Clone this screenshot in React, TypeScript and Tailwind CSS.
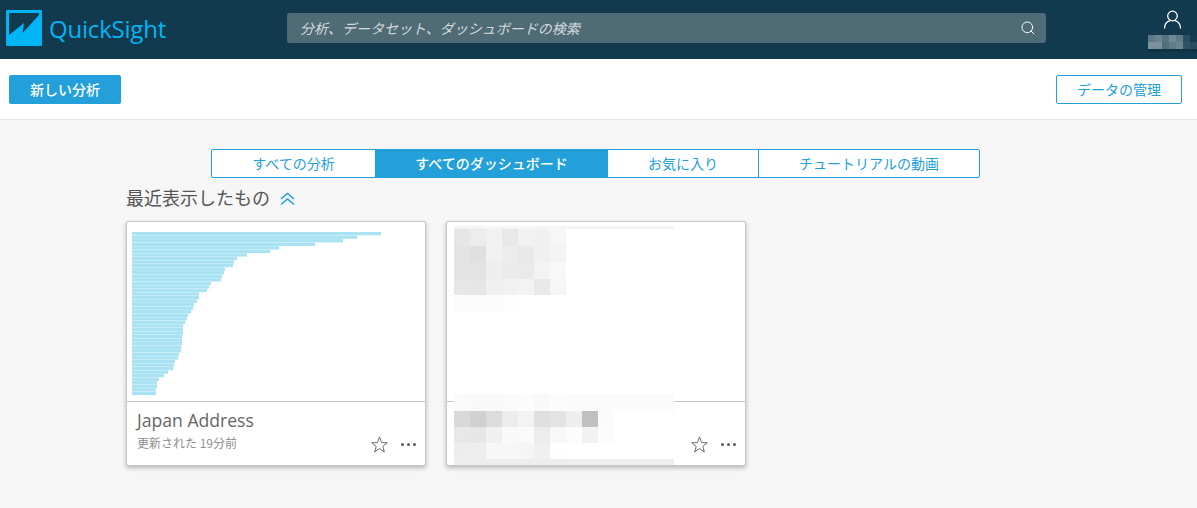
import { Search } from 'lucide-react';

const tabs = [
  { label: 'すべての分析', width: 'w-[163px]' },
  { label: 'すべてのダッシュボード', width: 'w-[233px]', active: true },
  { label: 'お気に入り', width: 'w-[151px]' },
  { label: 'チュートリアルの動画', width: 'flex-1' }
];

// right edges of the bars, in page px
const barEnds = [
  381, 357, 343, 315, 279, 270, 247, 237, 234, 233, 225, 224, 222, 221, 211, 209, 207, 199, 199, 197, 194, 193, 191,
  188, 187, 185, 183, 183, 183, 182, 182, 182, 181, 181, 179, 178, 175, 174, 173, 168, 164, 159, 157, 157, 156, 156
];

const thumbTop = [
  ['#e6e6e6', '#ececec', '#f1f1f1', '#e8e8e8', '#f1f1f1', '#f0f0f0', '#f6f6f6'],
  ['#e3e3e3', '#e0e0e0', '#f1f1f1', '#ececec', '#e9e9e9', '#f0f0f0', '#f3f3f3'],
  ['#e4e4e4', '#e3e3e3', '#eeeeee', '#ebebeb', '#eaeaea', '#f3f3f3', '#f8f8f8'],
  ['#e7e7e7', '#e6e6e6', '#f0f0f0', '#f1f1f1', '#f3f3f3', '#e9e9e9', '#f6f6f6'],
  ['#fcfcfc', '#fcfcfc', '#fcfcfc', '#fdfdfd', '#ffffff', '#ffffff', '#ffffff']
];

const thumbBottom = [
  ['#fafafa', '#f9f9f9', '#f9f9f9', '#fafafa', '#fcfcfc', '#f9f9f9', '#fcfcfc', '#fbfbfb', '#fafafa', '#fbfbfb'],
  ['#d9d9d9', '#d0d0d0', '#dcdcdc', '#ececec', '#f3f3f3', '#e0e0e0', '#e3e3e3', '#eeeeee', '#c0c0c0', '#fbfbfb'],
  ['#e8e8e8', '#e6e6e6', '#f0f0f0', '#f9f9f9', '#fafafa', '#ececec', '#f8f8f8', '#fcfcfc', '#f2f2f2', '#fcfcfc'],
  ['#ededed', '#eeeeee', '#f7f7f7', '#f7f7f7', '#f5f5f5', '#f0f0f0', '#fefefe', '#ffffff', '#ffffff', '#ffffff']
];

const userBlur = [
  ['#5f7a86', '#6b8590', '#557480', '#6f8a95', '#5e7a85', '#2a4f60', '#143b4f'],
  ['#7b929c', '#7b929c', '#4f6f7c', '#5f7c88', '#6a8590', '#2f5363', '#2a4d5e']
];

function Mosaic({ rows, cell, height }: { rows: string[][]; cell: number; height: number }) {
  return (
    <div className="flex flex-col">
      {rows.map((row, r) => (
        <div key={r} className="flex">
          {row.map((color, c) => (
            <div key={c} style={{ width: cell, height, backgroundColor: color }} />
          ))}
        </div>
      ))}
    </div>
  );
}

function CardActions() {
  return (
    <div className="absolute bottom-[12px] right-[9px] flex items-center gap-[13px]">
      <svg className="h-[17px] w-[17px]" viewBox="0 0 17 17" fill="none" stroke="#545b64" strokeWidth="0.9">
        <polygon points="8.500,1 10.600,6.600 16.200,6.800 11.800,10.300 13.300,16 8.500,12.700 3.700,16 5.200,10.300 0.800,6.800 6.400,6.600" />
      </svg>
      <div className="flex gap-[3px]">
        <span className="h-[3px] w-[3px] rounded-full bg-[#545b64]" />
        <span className="h-[3px] w-[3px] rounded-full bg-[#545b64]" />
        <span className="h-[3px] w-[3px] rounded-full bg-[#545b64]" />
      </div>
    </div>
  );
}

export default function App() {
  return (
    <div className="h-[508px] w-[1197px] overflow-hidden bg-[#f6f6f6] font-['Noto_Sans_CJK_JP','Noto_Sans',sans-serif]">
      <header className="relative flex h-[59px] items-start bg-[#123a4e] pt-[10px]">
        <svg className="ml-[6px] h-[36px] w-[36px] shrink-0" viewBox="0 0 36 36">
          <rect width="36" height="36" rx="1" fill="#00b5f5" />
          <polygon points="3,3 33,3 33,5 16.5,23 18,13 3,25" fill="#123a4e" />
        </svg>
        <div className="ml-[7px] w-[119px] whitespace-nowrap font-['Open_Sans',sans-serif] text-[24px] font-medium leading-[38px] tracking-[-0.2px] text-[#00b5f5]">
          QuickSight
        </div>
        <div className="ml-[119px] mt-[3px] flex h-[30px] w-[759px] items-center justify-between rounded-[3px] bg-[#4f6b76] pl-[13px] pr-[10px]">
          <span className="text-[14px] italic text-[#d5dadd]">分析、データセット、ダッシュボードの検索</span>
          <Search className="h-[16px] w-[16px] text-white" strokeWidth={1.5} />
        </div>
        <div className="absolute right-0 top-[10px] flex w-[49px] flex-col items-center">
          <svg className="h-[19px] w-[19px]" viewBox="0 0 19 19" fill="none" stroke="#ffffff" strokeWidth="1.3">
            <circle cx="9.5" cy="6" r="4.8" />
            <path d="M1.5 18.5c0-4.500 3-7 5.500-7.800M17.500 18.500c0-4.500-3-7-5.500-7.800" />
          </svg>
          <div className="mt-[6px]">
            <Mosaic rows={userBlur} cell={7} height={7} />
            <div className="h-[3px] w-[49px] bg-[#0f3344]" />
          </div>
        </div>
      </header>

      <div className="flex h-[61px] items-center justify-between border-b border-[#e6e6e6] bg-white pl-[9px] pr-[15px]">
        <button className="h-[29px] w-[112px] rounded-[2px] bg-[#23a0da] text-[14px] font-medium text-white">
          新しい分析
        </button>
        <button className="h-[29px] w-[126px] rounded-[2px] border border-[#23a0da] bg-white text-[14px] text-[#23a0da]">
          データの管理
        </button>
      </div>

      <div className="ml-[211px] mt-[29px] flex h-[29px] w-[769px] overflow-hidden rounded-[2px] border border-[#23a0da] bg-white">
        {tabs.map((tab, i) => (
          <div
            key={tab.label}
            className={
              tab.active
                ? `flex items-center justify-center bg-[#23a0da] text-[14px] font-medium text-white ${tab.width}`
                : `flex items-center justify-center text-[14px] text-[#23a0da] ${tab.width} ${i === 2 ? 'border-r border-[#23a0da]' : ''}`
            }
          >
            {tab.label}
          </div>
        ))}
      </div>

      <div className="ml-[126px] mt-[6px] flex h-[26px] items-center gap-[10px]">
        <h2 className="text-[18px] font-normal text-[#555555]">最近表示したもの</h2>
        <svg className="mt-[3px] h-[14px] w-[15px]" viewBox="0 0 15 14" fill="none" stroke="#23a0da" strokeWidth="1.6">
          <path d="M1 7l6.500-5.500L14 7M1 12.500L7.500 7l6.500 5.500" />
        </svg>
      </div>

      <div className="ml-[126px] mt-[11px] flex gap-[20px]">
        <div className="relative h-[245px] w-[300px] rounded-[2px] border border-[#c6c6c6] bg-white shadow-[0_2px_4px_rgba(0,0,0,0.25)]">
          <div className="h-[180px] border-b border-[#c6c6c6]">
            <svg className="block" width="298" height="178">
              {barEnds.map((end, i) => (
                <rect key={i} x="5" y={10 + i * 3.55} width={end - 132} height="3.3" fill="#a8e2f3" />
              ))}
            </svg>
          </div>
          <div className="pl-[10px] pt-[6px]">
            <div className="font-['Open_Sans',sans-serif] text-[17.6px] leading-[24px] text-[#666666]">Japan Address</div>
            <div className="mt-[3px] text-[12px] leading-[16px] text-[#8f8f8f]">更新された 19分前</div>
          </div>
          <CardActions />
        </div>

        <div className="relative h-[245px] w-[300px] rounded-[2px] border border-[#c6c6c6] bg-white shadow-[0_2px_4px_rgba(0,0,0,0.25)]">
          <div className="h-[180px] border-b border-[#c6c6c6]" />
          <div className="absolute left-[7px] top-[4px]">
            <div className="h-[3px] w-[220px] bg-[#f5f5f5]" />
            <Mosaic rows={thumbTop} cell={16} height={16.5} />
          </div>
          <div className="absolute bottom-0 left-[7px] w-[220px]">
            <div className="h-[17px] w-[220px] bg-[#fafafa]">
              <Mosaic rows={thumbBottom.slice(0, 1)} cell={16} height={17} />
            </div>
            <Mosaic rows={thumbBottom.slice(1)} cell={16} height={16} />
            <div className="h-[6px] w-[220px] bg-[#eeeeee]" />
          </div>
          <CardActions />
        </div>
      </div>
    </div>
  );
}
